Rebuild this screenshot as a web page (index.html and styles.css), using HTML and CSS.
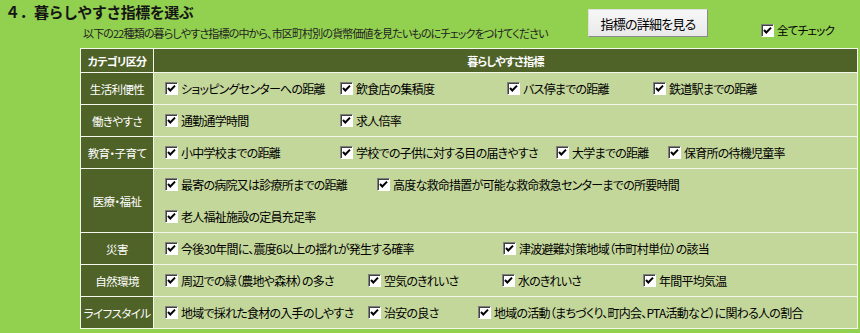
FILE: index.html
```html
<!DOCTYPE html>
<html lang="ja">
<head>
<meta charset="utf-8">
<link rel="stylesheet" href="styles.css">
</head>
<body>
<div class="top">
  <div class="top-left">
    <h1 class="title">４．暮らしやすさ指標を選ぶ</h1>
    <p class="lead">以下の22種類の暮らしやすさ指標の中から、市区町村別の貨幣価値を見たいものにチェックをつけてください</p>
  </div>
  <button class="btn">指標の詳細を見る</button>
  <label class="checkall"><span class="cb"><svg viewBox="0 0 11 11"><polyline points="2,5 4.3,7.5 9,2.6"/></svg></span>全てチェック</label>
</div>

<div class="grid">
  <div class="head">カテゴリ区分</div>
  <div class="head">暮らしやすさ指標</div>

  <div class="cat">生活利便性</div>
  <div class="cell r1">
    <span class="item"><span class="cb"><svg viewBox="0 0 11 11"><polyline points="2,5 4.3,7.5 9,2.6"/></svg></span>ショッピングセンターへの距離</span>
    <span class="item"><span class="cb"><svg viewBox="0 0 11 11"><polyline points="2,5 4.3,7.5 9,2.6"/></svg></span>飲食店の集積度</span>
    <span class="item"><span class="cb"><svg viewBox="0 0 11 11"><polyline points="2,5 4.3,7.5 9,2.6"/></svg></span>バス停までの距離</span>
    <span class="item"><span class="cb"><svg viewBox="0 0 11 11"><polyline points="2,5 4.3,7.5 9,2.6"/></svg></span>鉄道駅までの距離</span>
  </div>

  <div class="cat">働きやすさ</div>
  <div class="cell r2">
    <span class="item"><span class="cb"><svg viewBox="0 0 11 11"><polyline points="2,5 4.3,7.5 9,2.6"/></svg></span>通勤通学時間</span>
    <span class="item"><span class="cb"><svg viewBox="0 0 11 11"><polyline points="2,5 4.3,7.5 9,2.6"/></svg></span>求人倍率</span>
  </div>

  <div class="cat">教育・子育て</div>
  <div class="cell r3">
    <span class="item"><span class="cb"><svg viewBox="0 0 11 11"><polyline points="2,5 4.3,7.5 9,2.6"/></svg></span>小中学校までの距離</span>
    <span class="item"><span class="cb"><svg viewBox="0 0 11 11"><polyline points="2,5 4.3,7.5 9,2.6"/></svg></span>学校での子供に対する目の届きやすさ</span>
    <span class="item"><span class="cb"><svg viewBox="0 0 11 11"><polyline points="2,5 4.3,7.5 9,2.6"/></svg></span>大学までの距離</span>
    <span class="item"><span class="cb"><svg viewBox="0 0 11 11"><polyline points="2,5 4.3,7.5 9,2.6"/></svg></span>保育所の待機児童率</span>
  </div>

  <div class="cat">医療・福祉</div>
  <div class="cell r4">
    <span class="item"><span class="cb"><svg viewBox="0 0 11 11"><polyline points="2,5 4.3,7.5 9,2.6"/></svg></span>最寄の病院又は診療所までの距離</span>
    <span class="item"><span class="cb"><svg viewBox="0 0 11 11"><polyline points="2,5 4.3,7.5 9,2.6"/></svg></span>高度な救命措置が可能な救命救急センターまでの所要時間</span>
    <span class="item"><span class="cb"><svg viewBox="0 0 11 11"><polyline points="2,5 4.3,7.5 9,2.6"/></svg></span>老人福祉施設の定員充足率</span>
  </div>

  <div class="cat">災害</div>
  <div class="cell r5">
    <span class="item"><span class="cb"><svg viewBox="0 0 11 11"><polyline points="2,5 4.3,7.5 9,2.6"/></svg></span>今後30年間に、震度6以上の揺れが発生する確率</span>
    <span class="item"><span class="cb"><svg viewBox="0 0 11 11"><polyline points="2,5 4.3,7.5 9,2.6"/></svg></span>津波避難対策地域（市町村単位）の該当</span>
  </div>

  <div class="cat">自然環境</div>
  <div class="cell r6">
    <span class="item"><span class="cb"><svg viewBox="0 0 11 11"><polyline points="2,5 4.3,7.5 9,2.6"/></svg></span>周辺での緑（農地や森林）の多さ</span>
    <span class="item"><span class="cb"><svg viewBox="0 0 11 11"><polyline points="2,5 4.3,7.5 9,2.6"/></svg></span>空気のきれいさ</span>
    <span class="item"><span class="cb"><svg viewBox="0 0 11 11"><polyline points="2,5 4.3,7.5 9,2.6"/></svg></span>水のきれいさ</span>
    <span class="item"><span class="cb"><svg viewBox="0 0 11 11"><polyline points="2,5 4.3,7.5 9,2.6"/></svg></span>年間平均気温</span>
  </div>

  <div class="cat">ライフスタイル</div>
  <div class="cell r7">
    <span class="item"><span class="cb"><svg viewBox="0 0 11 11"><polyline points="2,5 4.3,7.5 9,2.6"/></svg></span>地域で採れた食材の入手のしやすさ</span>
    <span class="item"><span class="cb"><svg viewBox="0 0 11 11"><polyline points="2,5 4.3,7.5 9,2.6"/></svg></span>治安の良さ</span>
    <span class="item"><span class="cb"><svg viewBox="0 0 11 11"><polyline points="2,5 4.3,7.5 9,2.6"/></svg></span>地域の活動（まちづくり、町内会、PTA活動など）に関わる人の割合</span>
  </div>
</div>
</body>
</html>
```

FILE: styles.css
```css
html, body {
  margin: 0;
  padding: 0;
  background: #92d050;
}
body {
  width: 860px;
  height: 333px;
  overflow: hidden;
  font-family: "Noto Sans CJK JP", "Noto Sans", sans-serif;
  font-feature-settings: "palt";
  color: #000;
}

.top {
  display: flex;
  align-items: flex-start;
  height: 48px;
}
.top-left {
  width: 588px;
  flex: none;
}
.title {
  margin: 0;
  padding-left: 5px;
  font-size: 15px;
  font-weight: bold;
  letter-spacing: -0.5px;
  line-height: 24px;
  font-feature-settings: normal;
  color: #151515;
}
.lead {
  margin: 0;
  padding-left: 83px;
  font-size: 11px;
  letter-spacing: -0.85px;
  line-height: 18px;
  white-space: nowrap;
  color: #222;
}
.btn {
  flex: none;
  margin-top: 9px;
  width: 120px;
  height: 28px;
  padding: 0;
  font-family: inherit;
  font-feature-settings: "palt";
  font-size: 13px;
  letter-spacing: -0.8px;
  color: #000;
  background: linear-gradient(#f7f7f7, #e9e9e9);
  border: 1px solid;
  border-color: #e0e0e0 #8a8a8a #8a8a8a #e0e0e0;
}
.checkall {
  display: flex;
  align-items: center;
  gap: 3px;
  margin-left: 53px;
  margin-top: 22px;
  font-size: 11.5px;
  letter-spacing: -0.7px;
  line-height: 16px;
}

.cb {
  flex: none;
  display: inline-block;
  box-sizing: border-box;
  width: 13px;
  height: 13px;
  background: #fff;
  border: 1px solid;
  border-color: #808080 #ffffff #ffffff #808080;
  box-shadow: inset 1px 1px #404040;
}
.cb svg {
  display: block;
  width: 11px;
  height: 11px;
  fill: none;
  stroke: #000;
  stroke-width: 2;
}

.grid {
  margin-left: 80px;
  width: 778px;
  box-sizing: border-box;
  display: grid;
  grid-template-columns: 72px 1fr;
  grid-template-rows: 23px 31px 31px 31px 63px 31px 31px 31px;
  gap: 1px;
  padding: 1px;
  background: #f4f8ec;
}
.head {
  background: #4f6228;
  color: #fff;
  font-size: 11px;
  font-weight: bold;
  letter-spacing: -0.7px;
  display: flex;
  align-items: center;
  justify-content: center;
}
.cat {
  background: #4f6228;
  color: #fff;
  font-size: 11.5px;
  letter-spacing: -0.6px;
  display: flex;
  align-items: center;
  justify-content: center;
  white-space: nowrap;
}
.cell {
  background: #c4d79b;
  display: grid;
  align-items: center;
  align-content: center;
  padding-left: 11px;
  font-size: 12px;
  letter-spacing: -0.75px;
}
.item {
  display: flex;
  align-items: center;
  gap: 3px;
  white-space: nowrap;
}

.r1 { grid-template-columns: 175px 167px 146px 1fr; }
.r2 { grid-template-columns: 175px 1fr; }
.r3 { grid-template-columns: 175px 216px 112px 1fr; }
.r4 { grid-template-columns: 212px 1fr; grid-auto-rows: 32px; }
.r5 { grid-template-columns: 338px 1fr; }
.r6 { grid-template-columns: 203px 134px 141px 1fr; }
.r7 { grid-template-columns: 203px 110px 1fr; }
```
